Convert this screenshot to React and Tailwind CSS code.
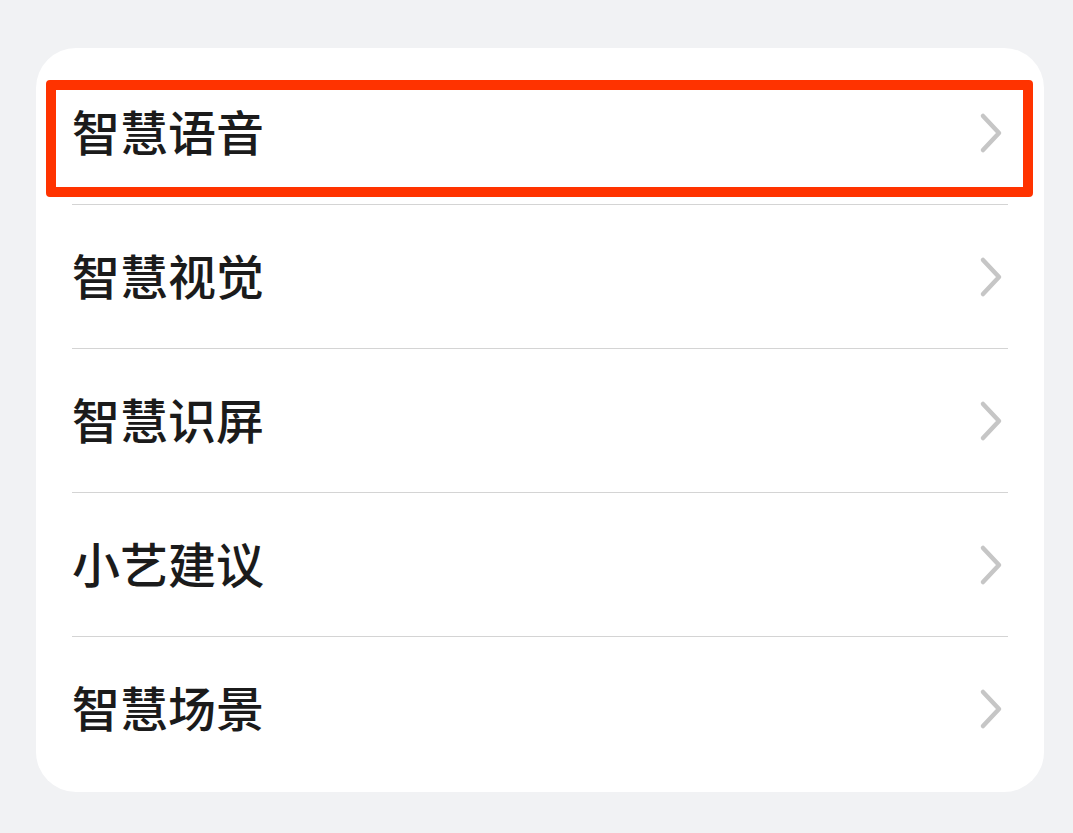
import React from "react";

const items = ["智慧语音", "智慧视觉", "智慧识屏", "小艺建议", "智慧场景"];

const Chevron = () => (
  <svg width="24" height="42" viewBox="0 0 24 42" fill="none" className="shrink-0">
    <polyline
      points="4,4 20,21 4,38"
      stroke="#c6c6c6"
      strokeWidth="4.5"
      strokeLinecap="round"
      strokeLinejoin="round"
    />
  </svg>
);

const Row = ({ label, last, highlighted }) => (
  <div className="relative">
    <div className="flex items-center justify-between h-[143px] pl-[36px] pr-[41px]">
      <span className="text-[48px] font-medium text-[#1b1b1b] leading-none mb-[6px]">{label}</span>
      <Chevron />
    </div>
    {!last && <div className="mx-[36px] h-px bg-[#d4d4d4]" />}
    {highlighted && (
      <div className="absolute left-[10px] right-[11px] top-[19px] h-[117px] border-[10px] border-[#ff3300] rounded-[4px]" />
    )}
  </div>
);

export default function App() {
  return (
    <div
      className="min-h-screen bg-[#f1f2f4] pt-[48px] pl-[36px]"
      style={{ fontFamily: '"Noto Sans CJK SC", "Noto Sans", sans-serif' }}
    >
      <div className="w-[1008px] bg-white rounded-[40px] pt-[13px] pb-[12px]">
        {items.map((label, i) => (
          <Row key={label} label={label} last={i === items.length - 1} highlighted={i === 0} />
        ))}
      </div>
    </div>
  );
}
